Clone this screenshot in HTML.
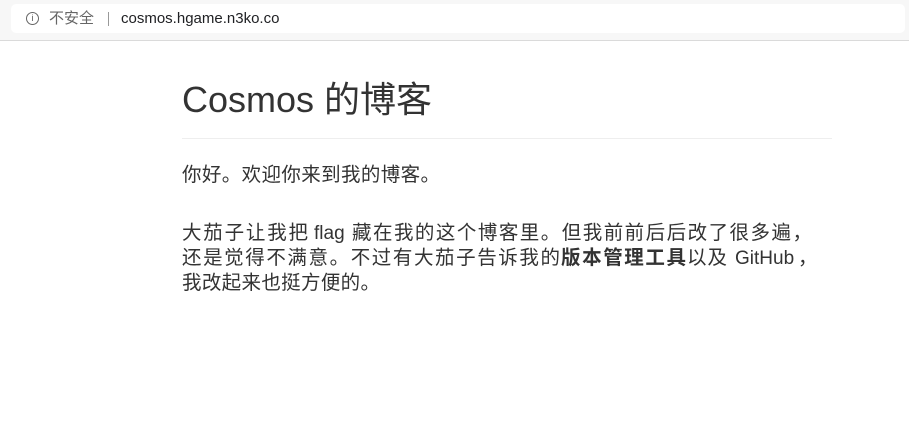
<!DOCTYPE html>
<html><head><meta charset="utf-8"><style>
*{margin:0;padding:0;box-sizing:border-box}
body{width:909px;height:421px;background:#fff;font-family:"Liberation Sans","Noto Sans CJK SC",sans-serif;color:#333;overflow:hidden;position:relative}
.bar{position:absolute;left:0;top:0;width:909px;height:41px;background:#f7f7f7;border-bottom:1px solid #dadada}
.url{position:absolute;left:11px;top:4px;width:894px;height:29px;background:#fff;border-radius:5px;font-size:15px;line-height:29px}
.i{position:absolute;left:15px;top:8px;width:13px;height:13px;border:1px solid #666;border-radius:50%;font-size:9px;line-height:11px;text-align:center;color:#555}
.ns{position:absolute;left:38px;color:#666}
.sep{position:absolute;left:97px;top:8px;width:1px;height:14px;background:#999}
.host{position:absolute;left:110px;color:#202124}
h1{position:absolute;left:182px;top:78px;font-size:36px;font-weight:normal;line-height:44px;color:#333}
hr{position:absolute;left:182px;top:138px;width:650px;border:0;border-top:1px solid #eee}
.s{position:absolute;font-size:19.5px;line-height:25px;color:#333;white-space:nowrap;text-align:justify;text-align-last:justify}
.l{font-size:19px}
b{font-weight:bold}
</style></head><body>
<div class="bar"><div class="url"><div class="i">i</div><span class="ns">不安全</span><div class="sep"></div><span class="host">cosmos.hgame.n3ko.co</span></div></div>
<h1>Cosmos 的博客</h1>
<hr>
<div class="s" style="left:182px;top:163px;width:258px">你好。欢迎你来到我的博客。</div>

<div class="s" style="left:182px;top:221px;width:126px">大茄子让我把</div>
<div class="s l" style="left:314px;top:221px">flag</div>
<div class="s" style="left:352px;top:221px;width:460px">藏在我的这个博客里。但我前前后后改了很多遍，</div>

<div class="s" style="left:182px;top:246px;width:378px">还是觉得不满意。不过有大茄子告诉我的</div>
<div class="s" style="left:561px;top:246px;width:125px"><b>版本管理工具</b></div>
<div class="s" style="left:687px;top:246px;width:40px">以及</div>
<div class="s l" style="left:735px;top:246px">GitHub</div>
<div class="s" style="left:798px;top:246px">，</div>

<div class="s" style="left:182px;top:271px;width:198px">我改起来也挺方便的。</div>
</body></html>
